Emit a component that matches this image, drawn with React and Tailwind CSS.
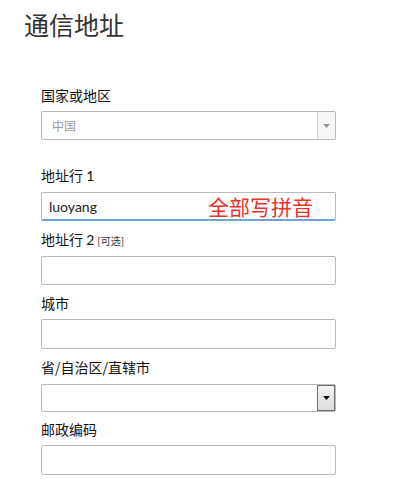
import React from "react";

function Label({ children, mt }) {
  return (
    <div
      className={`h-[20px] leading-[20px] text-[14px] text-[#111] font-['Noto_Sans_CJK_SC','Noto_Sans',sans-serif] ${mt}`}
    >
      {children}
    </div>
  );
}

function Box({ h, mt, children, cls = "" }) {
  return (
    <div
      className={`relative w-[295px] ${h} ${mt} border border-[#b9b9b9] rounded-[2px] bg-white ${cls}`}
    >
      {children}
    </div>
  );
}

export default function App() {
  return (
    <div className="w-[402px] h-[499px] bg-white overflow-hidden">
      <div className="pl-[24px] pt-[8px] h-[40px] leading-[32px] text-[25px] text-[#333] font-['Noto_Sans_CJK_SC',sans-serif]">
        通信地址
      </div>
      <div className="pl-[41px]">
        <Label mt="mt-[45px]">国家或地区</Label>
        <Box h="h-[29px]" mt="mt-[6px]" cls="flex">
          <div className="flex-1 pl-[10px] text-[12px] leading-[27px] text-[#999] font-['Noto_Sans_CJK_SC',sans-serif]">
            中国
          </div>
          <div className="w-[18px] h-full border-l border-[#d0d0d0] bg-[#f7f7f7] flex items-center justify-center">
            <svg width="7" height="4" viewBox="0 0 7 4">
              <path d="M0 0H7L3.5 4Z" fill="#9a9a9a" />
            </svg>
          </div>
        </Box>

        <Label mt="mt-[25px]">
          <span>地址行 </span>
          <span className="font-['Lato',sans-serif]">1</span>
        </Label>
        <Box h="h-[29px]" mt="mt-[7px]" cls="border-b-2 border-b-[#6aa7d6] flex items-center">
          <div className="pl-[7px] flex-1 text-[14px] text-[#222] font-['Lato',sans-serif]">
            luoyang
          </div>
          <div className="pr-[22px] text-[21px] leading-[26px] text-[#e8332a] font-['Noto_Sans_CJK_SC',sans-serif]">
            全部写拼音
          </div>
        </Box>

        <Label mt="mt-[8px]">
          <span>地址行 </span>
          <span className="font-['Lato',sans-serif]">2</span>
          <span className="text-[10px] text-[#333] ml-[3px]">[可选]</span>
        </Label>
        <Box h="h-[29px]" mt="mt-[7px]" />

        <Label mt="mt-[8px]">城市</Label>
        <Box h="h-[30px]" mt="mt-[6px]" />

        <Label mt="mt-[8px]">省/自治区/直辖市</Label>
        <Box h="h-[28px]" mt="mt-[7px]" cls="flex">
          <div className="flex-1" />
          <div className="w-[18px] h-[26px] border border-[#707070] bg-gradient-to-b from-[#f4f4f4] to-[#dcdcdc] flex items-center justify-center">
            <svg width="7" height="4" viewBox="0 0 7 4">
              <path d="M0 0H7L3.5 4Z" fill="#111" />
            </svg>
          </div>
        </Box>

        <Label mt="mt-[7px]">邮政编码</Label>
        <Box h="h-[30px]" mt="mt-[6px]" />
      </div>
    </div>
  );
}
